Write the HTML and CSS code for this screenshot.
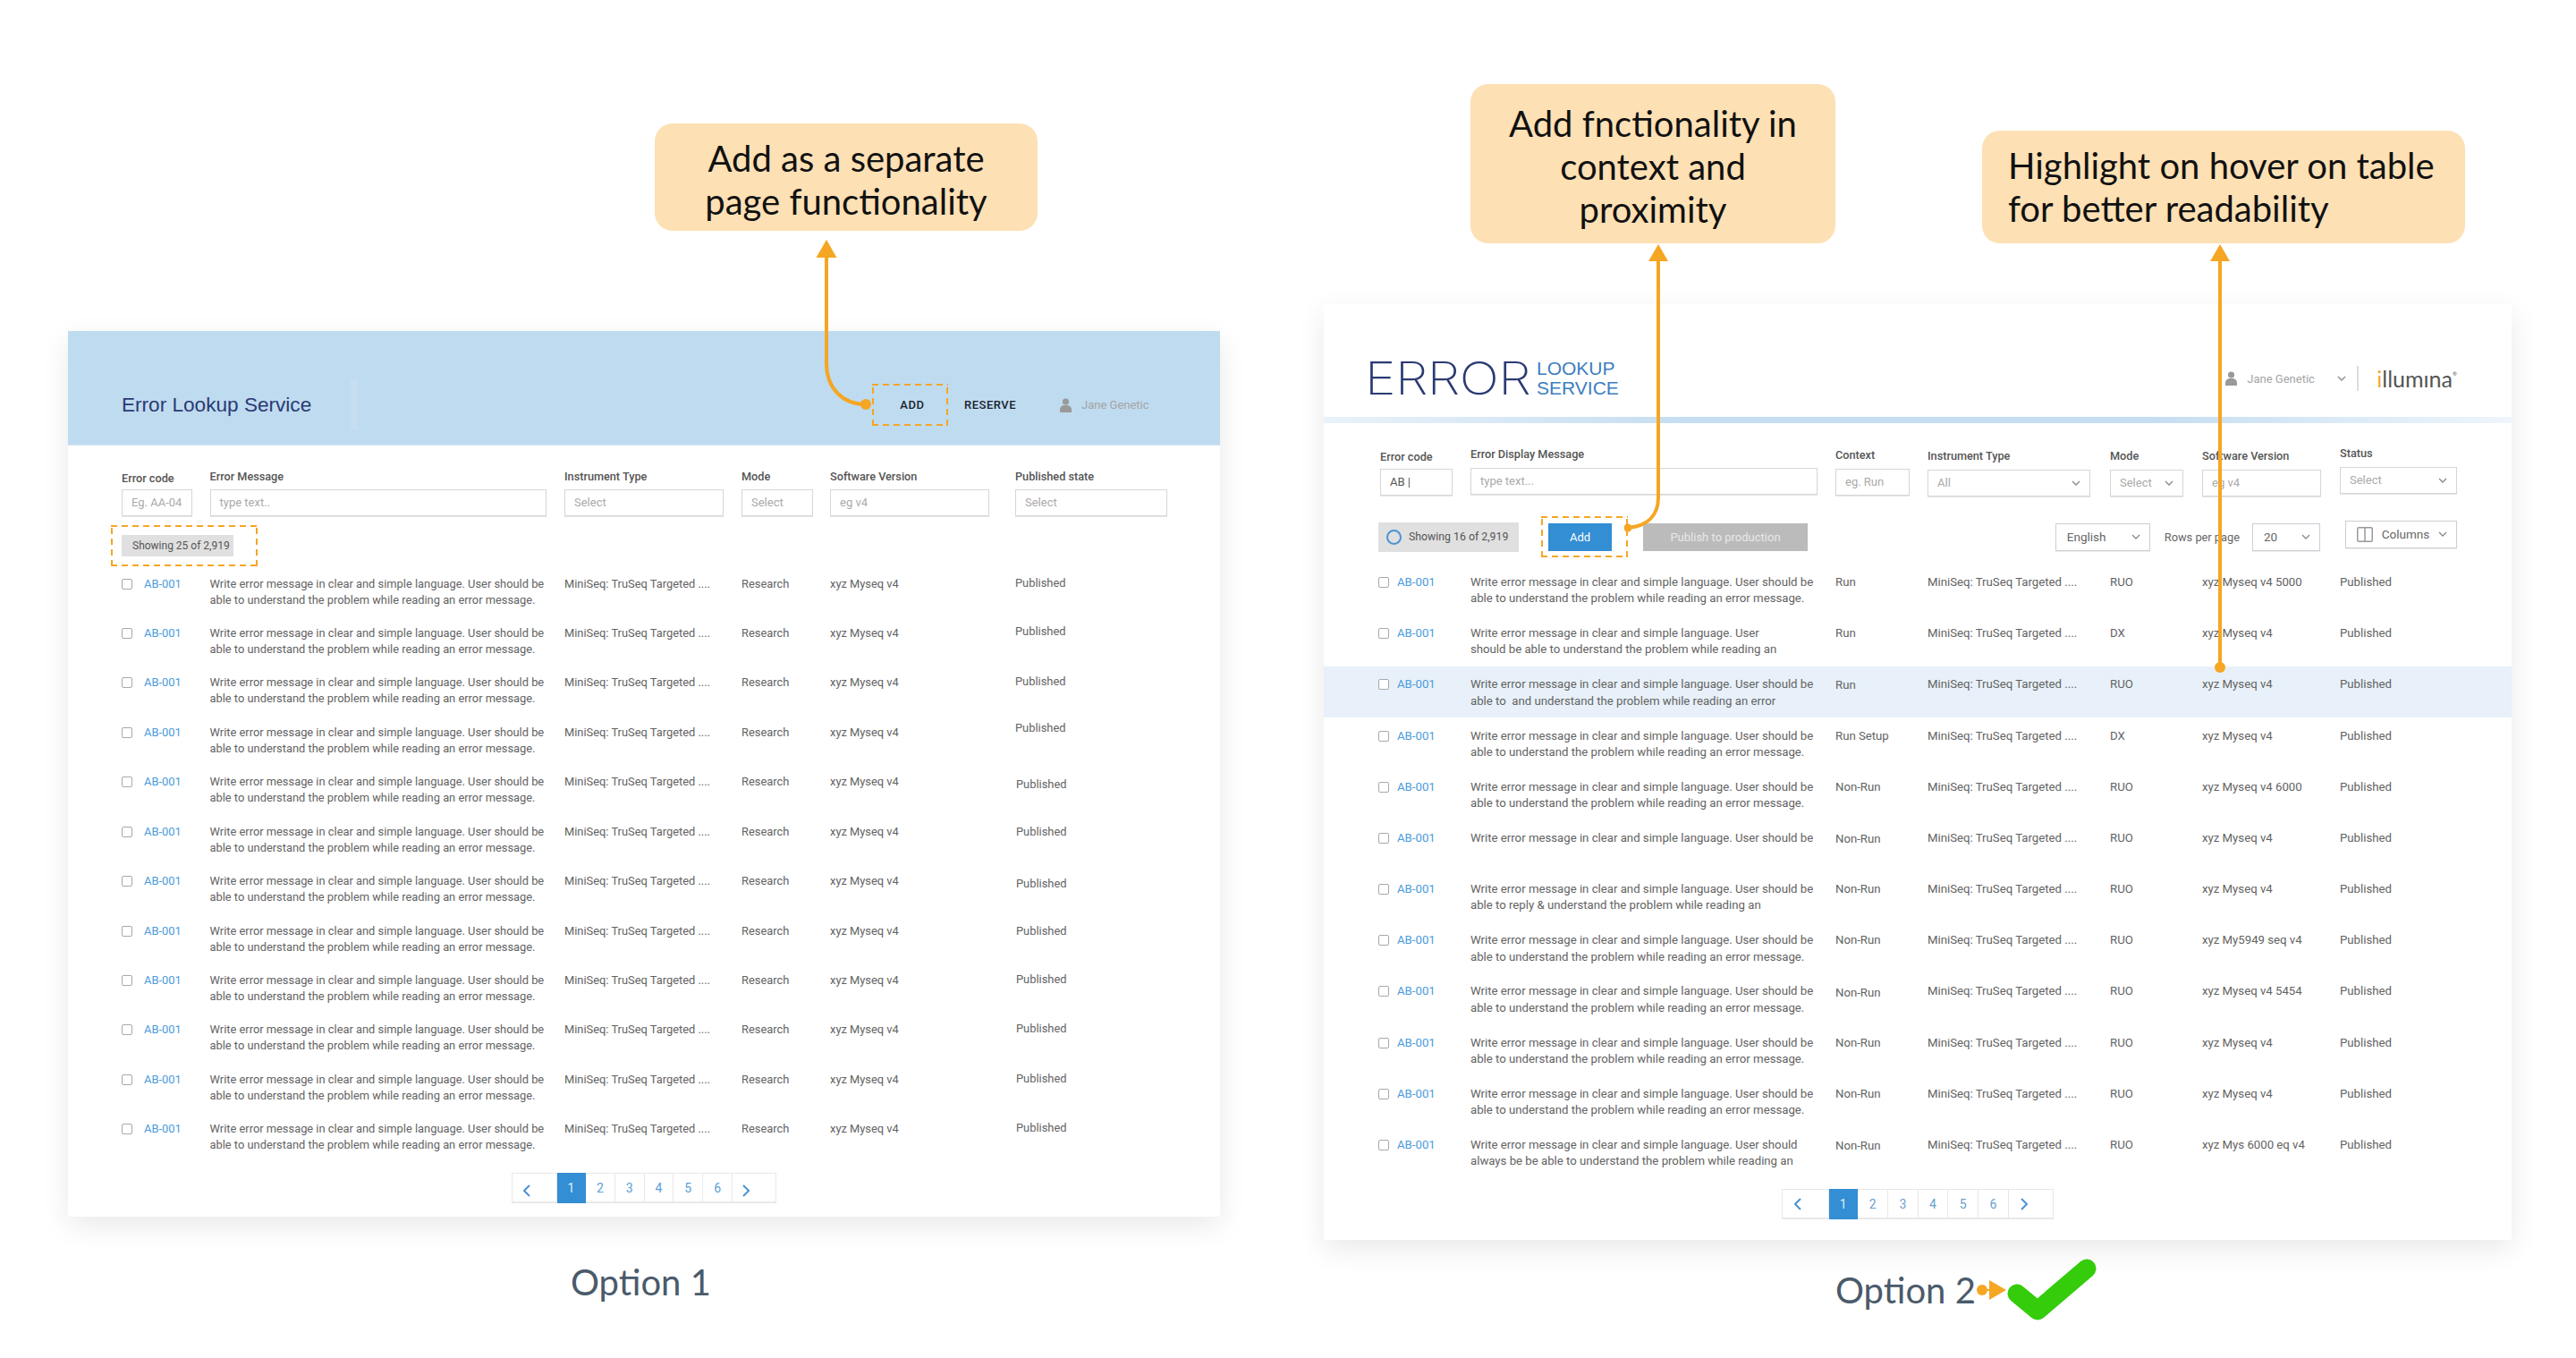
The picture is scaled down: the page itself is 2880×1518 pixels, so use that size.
FILE: index.html
```html
<!DOCTYPE html>
<html lang="en">
<head>
<meta charset="utf-8">
<title>Error Lookup Service options</title>
<link rel="stylesheet" href="styles.css">
</head>
<body>
<main class="canvas">

<div class="callout callout-a">Add as a separate<br>page functionality</div>
<div class="callout callout-b">Add fnctionality in<br>context and<br>proximity</div>
<div class="callout callout-c">Highlight on hover on table<br>for better readability</div>

<section class="panel panel-one">
  <header class="head-one">
    <h1 class="title-one">Error Lookup Service</h1>
    <span class="grip"></span>
    <nav class="nav-one">
      <span class="dash add-box">ADD</span>
      <span class="nav-link">RESERVE</span>
      <svg class="person person-one" viewBox="0 0 13 16"><circle cx="6.5" cy="4" r="3.6"/><path d="M0 16v-3.5C0 9.8 2.5 8.4 4.2 8h4.6C10.5 8.4 13 9.8 13 12.5V16z"/></svg>
      <span class="user">Jane Genetic</span>
    </nav>
  </header>

  <div class="filters">
    <div><div class="label label-low">Error code</div><div class="field w79">Eg. AA-04</div></div>
    <div><div class="label">Error Message</div><div class="field w376">type text..</div></div>
    <div><div class="label">Instrument Type</div><div class="field w177">Select</div></div>
    <div><div class="label">Mode</div><div class="field w80">Select</div></div>
    <div><div class="label">Software Version</div><div class="field w178">eg v4</div></div>
    <div><div class="label">Published state</div><div class="field w170">Select</div></div>
  </div>

  <div class="dash chip-box"><div class="chip">Showing 25 of 2,919</div></div>

  <div class="rows">
    <div class="row"><div class="code"><span class="box"></span><a>AB-001</a></div><div>Write error message in clear and simple language. User should be<br>able to understand the problem while reading an error message.</div><div>MiniSeq: TruSeq Targeted ....</div><div>Research</div><div>xyz Myseq v4</div><div class="up1">Published</div></div>
    <div class="row"><div class="code"><span class="box"></span><a>AB-001</a></div><div>Write error message in clear and simple language. User should be<br>able to understand the problem while reading an error message.</div><div>MiniSeq: TruSeq Targeted ....</div><div>Research</div><div>xyz Myseq v4</div><div class="up2">Published</div></div>
    <div class="row"><div class="code"><span class="box"></span><a>AB-001</a></div><div>Write error message in clear and simple language. User should be<br>able to understand the problem while reading an error message.</div><div>MiniSeq: TruSeq Targeted ....</div><div>Research</div><div>xyz Myseq v4</div><div class="up1">Published</div></div>
    <div class="row"><div class="code"><span class="box"></span><a>AB-001</a></div><div>Write error message in clear and simple language. User should be<br>able to understand the problem while reading an error message.</div><div>MiniSeq: TruSeq Targeted ....</div><div>Research</div><div>xyz Myseq v4</div><div class="up5">Published</div></div>
    <div class="row"><div class="code"><span class="box"></span><a>AB-001</a></div><div>Write error message in clear and simple language. User should be<br>able to understand the problem while reading an error message.</div><div>MiniSeq: TruSeq Targeted ....</div><div>Research</div><div>xyz Myseq v4</div><div class="down3 nudge">Published</div></div>
    <div class="row"><div class="code"><span class="box"></span><a>AB-001</a></div><div>Write error message in clear and simple language. User should be<br>able to understand the problem while reading an error message.</div><div>MiniSeq: TruSeq Targeted ....</div><div>Research</div><div>xyz Myseq v4</div><div class="nudge">Published</div></div>
    <div class="row"><div class="code"><span class="box"></span><a>AB-001</a></div><div>Write error message in clear and simple language. User should be<br>able to understand the problem while reading an error message.</div><div>MiniSeq: TruSeq Targeted ....</div><div>Research</div><div>xyz Myseq v4</div><div class="down3 nudge">Published</div></div>
    <div class="row"><div class="code"><span class="box"></span><a>AB-001</a></div><div>Write error message in clear and simple language. User should be<br>able to understand the problem while reading an error message.</div><div>MiniSeq: TruSeq Targeted ....</div><div>Research</div><div>xyz Myseq v4</div><div class="nudge">Published</div></div>
    <div class="row"><div class="code"><span class="box"></span><a>AB-001</a></div><div>Write error message in clear and simple language. User should be<br>able to understand the problem while reading an error message.</div><div>MiniSeq: TruSeq Targeted ....</div><div>Research</div><div>xyz Myseq v4</div><div class="up1 nudge">Published</div></div>
    <div class="row"><div class="code"><span class="box"></span><a>AB-001</a></div><div>Write error message in clear and simple language. User should be<br>able to understand the problem while reading an error message.</div><div>MiniSeq: TruSeq Targeted ....</div><div>Research</div><div>xyz Myseq v4</div><div class="up1 nudge">Published</div></div>
    <div class="row"><div class="code"><span class="box"></span><a>AB-001</a></div><div>Write error message in clear and simple language. User should be<br>able to understand the problem while reading an error message.</div><div>MiniSeq: TruSeq Targeted ....</div><div>Research</div><div>xyz Myseq v4</div><div class="up1 nudge">Published</div></div>
    <div class="row"><div class="code"><span class="box"></span><a>AB-001</a></div><div>Write error message in clear and simple language. User should be<br>able to understand the problem while reading an error message.</div><div>MiniSeq: TruSeq Targeted ....</div><div>Research</div><div>xyz Myseq v4</div><div class="up1 nudge">Published</div></div>
  </div>

  <div class="pager pager-one">
    <span class="pg pg-prev"><svg viewBox="0 0 10 16"><path d="M8 2L2 8l6 6"/></svg></span>
    <span class="pg pg-on">1</span><span class="pg">2</span><span class="pg">3</span><span class="pg">4</span><span class="pg">5</span><span class="pg">6</span>
    <span class="pg pg-next"><svg viewBox="0 0 10 16"><path d="M2 2l6 6-6 6"/></svg></span>
  </div>
</section>

<section class="panel panel-two">
  <header class="head-two">
    <div class="logo"><span class="logo-main">ERROR</span><span class="logo-sub">LOOKUP<br>SERVICE</span></div>
    <div class="account">
      <svg class="person" viewBox="0 0 13 16"><circle cx="6.5" cy="4" r="3.6"/><path d="M0 16v-3.5C0 9.8 2.5 8.4 4.2 8h4.6C10.5 8.4 13 9.8 13 12.5V16z"/></svg>
      <span class="user">Jane Genetic</span>
      <svg class="chev chev-user" viewBox="0 0 10 6"><path d="M1 1l4 4 4-4"/></svg>
      <span class="rule"></span>
      <span class="illumina"><span class="illumina-i">i</span>llumına<sup>®</sup></span>
    </div>
  </header>
  <div class="glow"></div>

  <div class="filters-two">
    <div class="mt2 ml2"><div class="label label-low">Error code</div><div class="field w81 typed">AB |</div></div>
    <div class="mt1"><div class="label">Error Display Message</div><div class="field w388">type text...</div></div>
    <div class="mt2"><div class="label">Context</div><div class="field w83">eg. Run</div></div>
    <div class="mt3"><div class="label">Instrument Type</div><div class="field w182 sel">All<svg class="chev" viewBox="0 0 10 6"><path d="M1 1l4 4 4-4"/></svg></div></div>
    <div class="mt3"><div class="label">Mode</div><div class="field w82 sel">Select<svg class="chev" viewBox="0 0 10 6"><path d="M1 1l4 4 4-4"/></svg></div></div>
    <div class="mt3"><div class="label">Software Version</div><div class="field w133">eg v4</div></div>
    <div><div class="label">Status</div><div class="field w130 sel">Select<svg class="chev" viewBox="0 0 10 6"><path d="M1 1l4 4 4-4"/></svg></div></div>
  </div>

  <div class="toolbar">
    <div class="chip chip-two"><span class="ring"></span>Showing 16 of 2,919</div>
    <div class="dash btn-box"><button class="btn btn-add">Add</button></div>
    <button class="btn btn-pub">Publish to production</button>
    <div class="tool-right">
      <div class="drop w106">English<svg class="chev" viewBox="0 0 10 6"><path d="M1 1l4 4 4-4"/></svg></div>
      <span class="rpp">Rows per page</span>
      <div class="drop w76">20<svg class="chev" viewBox="0 0 10 6"><path d="M1 1l4 4 4-4"/></svg></div>
      <div class="drop w125 raised"><svg class="cols" viewBox="0 0 18 17"><rect x=".75" y=".75" width="16.5" height="15.5" rx="1.5"/><path d="M9 1v15"/></svg>Columns<svg class="chev" viewBox="0 0 10 6"><path d="M1 1l4 4 4-4"/></svg></div>
    </div>
  </div>

  <div class="rows-two">
    <div class="row2"><div class="code code2"><span class="box"></span><a>AB-001</a></div><div>Write error message in clear and simple language. User should be<br>able to understand the problem while reading an error message.</div><div>Run</div><div>MiniSeq: TruSeq Targeted ....</div><div>RUO</div><div>xyz Myseq v4 5000</div><div>Published</div></div>
    <div class="row2"><div class="code code2"><span class="box"></span><a>AB-001</a></div><div>Write error message in clear and simple language. User<br>should be able to understand the problem while reading an</div><div>Run</div><div>MiniSeq: TruSeq Targeted ....</div><div>DX</div><div>xyz Myseq v4</div><div>Published</div></div>
    <div class="row2 row-hover"><div class="code code2"><span class="box"></span><a>AB-001</a></div><div>Write error message in clear and simple language. User should be<br>able to&nbsp; and understand the problem while reading an error</div><div class="down1">Run</div><div>MiniSeq: TruSeq Targeted ....</div><div>RUO</div><div>xyz Myseq v4</div><div>Published</div></div>
    <div class="row2"><div class="code code2"><span class="box"></span><a>AB-001</a></div><div>Write error message in clear and simple language. User should be<br>able to understand the problem while reading an error message.</div><div>Run Setup</div><div>MiniSeq: TruSeq Targeted ....</div><div>DX</div><div>xyz Myseq v4</div><div>Published</div></div>
    <div class="row2"><div class="code code2"><span class="box"></span><a>AB-001</a></div><div>Write error message in clear and simple language. User should be<br>able to understand the problem while reading an error message.</div><div>Non-Run</div><div>MiniSeq: TruSeq Targeted ....</div><div>RUO</div><div>xyz Myseq v4 6000</div><div>Published</div></div>
    <div class="row2"><div class="code code2"><span class="box"></span><a>AB-001</a></div><div>Write error message in clear and simple language. User should be</div><div class="down1">Non-Run</div><div>MiniSeq: TruSeq Targeted ....</div><div>RUO</div><div>xyz Myseq v4</div><div>Published</div></div>
    <div class="row2"><div class="code code2"><span class="box"></span><a>AB-001</a></div><div>Write error message in clear and simple language. User should be<br>able to reply &amp; understand the problem while reading an</div><div>Non-Run</div><div>MiniSeq: TruSeq Targeted ....</div><div>RUO</div><div>xyz Myseq v4</div><div>Published</div></div>
    <div class="row2"><div class="code code2"><span class="box"></span><a>AB-001</a></div><div>Write error message in clear and simple language. User should be<br>able to understand the problem while reading an error message.</div><div>Non-Run</div><div>MiniSeq: TruSeq Targeted ....</div><div>RUO</div><div>xyz My5949 seq v4</div><div>Published</div></div>
    <div class="row2"><div class="code code2"><span class="box"></span><a>AB-001</a></div><div>Write error message in clear and simple language. User should be<br>able to understand the problem while reading an error message.</div><div class="down2">Non-Run</div><div>MiniSeq: TruSeq Targeted ....</div><div>RUO</div><div>xyz Myseq v4 5454</div><div>Published</div></div>
    <div class="row2"><div class="code code2"><span class="box"></span><a>AB-001</a></div><div>Write error message in clear and simple language. User should be<br>able to understand the problem while reading an error message.</div><div>Non-Run</div><div>MiniSeq: TruSeq Targeted ....</div><div>RUO</div><div>xyz Myseq v4</div><div>Published</div></div>
    <div class="row2"><div class="code code2"><span class="box"></span><a>AB-001</a></div><div>Write error message in clear and simple language. User should be<br>able to understand the problem while reading an error message.</div><div>Non-Run</div><div>MiniSeq: TruSeq Targeted ....</div><div>RUO</div><div>xyz Myseq v4</div><div>Published</div></div>
    <div class="row2"><div class="code code2"><span class="box"></span><a>AB-001</a></div><div>Write error message in clear and simple language. User should<br>always be be able to understand the problem while reading an</div><div class="down1">Non-Run</div><div>MiniSeq: TruSeq Targeted ....</div><div>RUO</div><div>xyz Mys 6000 eq v4</div><div>Published</div></div>
  </div>

  <div class="pager pager-two">
    <span class="pg pg-prev"><svg viewBox="0 0 10 16"><path d="M8 2L2 8l6 6"/></svg></span>
    <span class="pg pg-on">1</span><span class="pg">2</span><span class="pg">3</span><span class="pg">4</span><span class="pg">5</span><span class="pg">6</span>
    <span class="pg pg-next"><svg viewBox="0 0 10 16"><path d="M2 2l6 6-6 6"/></svg></span>
  </div>
</section>

<div class="option option-one">Option 1</div>
<div class="option option-two">Option 2</div>

<svg class="marks" viewBox="0 0 2880 1518">
  <g class="arrow">
    <path d="M968 452C942 452 924 434 924 406V286"/>
    <path d="M1820 590C1842 588 1854 576 1854 556V290"/>
    <path d="M2482 746V290"/>
  </g>
  <g class="arrow-fill">
    <circle cx="968" cy="452" r="6"/>
    <path d="M924 268l11.5 20h-23z"/>
    <circle cx="1820" cy="590" r="4.5"/>
    <path d="M1854 273l11 19h-22z"/>
    <circle cx="2482" cy="746" r="6"/>
    <path d="M2482 273l11 19h-22z"/>
    <circle cx="2216" cy="1442" r="6"/>
    <path d="M2216 1441h10v2h-10z"/>
    <path d="M2224 1431l19 11-19 11z"/>
  </g>
  <path class="tick" d="M2255 1446L2278 1465 2333 1418"/>
</svg>
</main>
</body>
</html>
```
FILE: styles.css
```css
* { box-sizing: border-box; }
html, body { margin: 0; padding: 0; background: #fff; }
.canvas { position: relative; width: 2880px; height: 1518px; overflow: hidden; font-family: Roboto, sans-serif; color: #666; }

/* callouts */
.callout { position: absolute; background: #fde0b4; border-radius: 20px; font-family: Lato, sans-serif; font-size: 40px; line-height: 48px; color: #111; display: flex; align-items: center; justify-content: center; text-align: center; }
.callout-a { left: 732px; top: 138px; width: 428px; height: 120px; padding-top: 6px; }
.callout-b { left: 1644px; top: 94px; width: 408px; height: 178px; padding-top: 6px; }
.callout-c { left: 2216px; top: 146px; width: 540px; height: 126px; justify-content: flex-start; text-align: left; padding-left: 29px; }

/* panels */
.panel { position: absolute; background: #fff; box-shadow: 0 10px 30px rgba(0,0,0,.09); }
.panel-one { left: 76px; top: 370px; width: 1288px; height: 990px; }
.panel-two { left: 1480px; top: 340px; width: 1328px; height: 1046px; }

.dash {
  background-image:
    repeating-linear-gradient(90deg, #f5a623 0 7px, transparent 7px 12px),
    repeating-linear-gradient(90deg, #f5a623 0 7px, transparent 7px 12px),
    repeating-linear-gradient(0deg, #f5a623 0 7px, transparent 7px 12px),
    repeating-linear-gradient(0deg, #f5a623 0 7px, transparent 7px 12px);
  background-size: 100% 2px, 100% 2px, 2px 100%, 2px 100%;
  background-position: 0 0, 0 100%, 0 0, 100% 0;
  background-repeat: no-repeat;
}

/* panel one header */
.head-one { height: 128px; background: #bfdbf0; display: flex; align-items: center; padding: 38px 81px 0 60px; border-bottom: 1px solid #d3e5f3; }
.title-one { margin: 0; font: 400 22.6px/30px "Liberation Sans", sans-serif; color: #2b3a73; }
.grip { width: 8px; height: 55px; margin-left: 44px; background: repeating-linear-gradient(0deg, #c9deef 0 2px, #c2dcf1 2px 3px); }
.nav-one { margin-left: auto; display: flex; align-items: center; }
.add-box { width: 85px; height: 47px; display: flex; align-items: center; justify-content: center; padding-left: 6px; font-weight: 500; font-size: 13px; letter-spacing: .6px; color: #1a1f2b; }
.nav-link { width: 57px; margin-left: 18.5px; font-weight: 500; font-size: 13px; letter-spacing: .5px; color: #1a1f2b; white-space: nowrap; }
.person { width: 13px; height: 16px; fill: #999; flex: none; }
.person-one { margin-left: 50px; }
.user { width: 74px; margin-left: 11px; font-size: 13px; color: #a4a4a4; white-space: nowrap; }

/* filters */
.filters, .row { display: grid; grid-template-columns: 98.5px 396.5px 198px 99px 207px 170px; }
.filters { margin: 26px 0 0 60px; }
.label { font-weight: 500; font-size: 12.7px; line-height: 18px; color: #555; margin-bottom: 5px; white-space: nowrap; }
.label-low { margin-top: 2px; margin-bottom: 3px; }
.field { height: 30px; border: 1px solid #d6d6d6; box-shadow: 0 1px 0 #e6e6e6; background: #fff; padding-left: 10px; font-size: 13px; line-height: 28px; color: #aaa; display: flex; align-items: center; justify-content: space-between; }
.w79 { width: 79px; } .w376 { width: 376.5px; } .w177 { width: 177.5px; } .w80 { width: 80px; } .w178 { width: 178px; } .w170 { width: 170px; }
.w81 { width: 81px; } .w388 { width: 388px; } .w83 { width: 83px; } .w182 { width: 182px; } .w82 { width: 82px; } .w133 { width: 133px; } .w130 { width: 130.5px; }
.typed { color: #555; }
.chip-box { width: 164px; height: 46px; margin: 10px 0 0 48px; padding: 11px 0 0 12px; }
.chip { width: 125px; height: 24px; padding-left: 12px; background: #e0e0e0; font-size: 12px; line-height: 24px; color: #555; white-space: nowrap; }

/* rows */
.rows { margin: 10.5px 0 0 60px; }
.row { height: 55.45px; font-size: 12.86px; line-height: 18px; color: #636363; white-space: nowrap; }
.code { display: flex; gap: 13px; color: #4a9bdc; }
.code a { color: #4a9bdc; }
.box { width: 12px; height: 12px; margin-top: 3px; border: 1px solid #a8a8a8; border-radius: 2px; background: #fff; flex: none; }
.up1 { margin-top: -1px; } .up2 { margin-top: -2px; } .up5 { margin-top: -5px; } .down1 { margin-top: 1px; } .down2 { margin-top: 2px; } .down3 { margin-top: 3px; }
.nudge { margin-left: 1px; }

/* pager */
.pager { display: flex; justify-content: center; height: 34px; }
.pager-one { margin-top: 2.5px; }
.pager-two { margin-top: 12.5px; }
.pg { width: 32.8px; height: 34px; border: 1px solid #e8e8e8; border-left-width: 0; border-bottom-width: 2px; display: flex; align-items: center; justify-content: center; font-size: 14px; color: #5a9fd8; background: #fff; }
.pg svg { width: 10px; height: 16px; fill: none; stroke: #4a93d4; stroke-width: 2; }
.pg-prev { width: 51px; justify-content: flex-start; padding: 6px 0 0 11px; border-left-width: 1px; }
.pg-next { width: 49px; justify-content: flex-start; padding: 6px 0 0 10px; }
.pg-on { background: #338ed4; color: #dfeefa; border-color: #338ed4; width: 32px; }
.pager-two .pg { width: 33.7px; color: #6aa0cc; }
.pager-two .pg-prev { width: 53px; padding: 0 0 0 12px; }
.pager-two .pg-next { width: 50px; padding: 0 0 0 12px; }
.pager-two .pg-on { width: 32px; color: #dfeefa; }

/* panel two header */
.head-two { height: 126px; display: flex; align-items: center; justify-content: space-between; padding: 40px 61px 0 46px; }
.logo { display: flex; align-items: center; }
.logo-main { width: 192px; font-family: Inter, sans-serif; font-weight: 200; font-size: 50px; line-height: 40px; color: #2b3a73; letter-spacing: -.5px; transform: scaleX(1.17); transform-origin: 0 50%; }
.logo-sub { font: 400 21px/22px "Liberation Sans", sans-serif; color: #3d7ebf; }
.account { display: flex; align-items: center; }
.chev { width: 10px; height: 6px; fill: none; stroke: #888; stroke-width: 1.3; flex: none; }
.chev-user { margin-left: 27px; }
.rule { width: 2px; height: 28px; margin: 0 20px 0 12px; background: #ddd; }
.illumina { font-family: Lato, sans-serif; font-weight: 400; font-size: 25px; line-height: 34px; color: #555; }
.illumina-i { color: #e8a93a; }
.illumina sup { font-size: 6px; vertical-align: 13px; line-height: 0; }
.glow { height: 7px; background: linear-gradient(90deg, #eaf2f9 0, #c6def2 30%, #c6def2 70%, #eaf3fa 97%, #eff5fa 100%); }

.filters-two, .row2 { display: grid; grid-template-columns: 103px 408px 103px 204px 103px 154px 131px; }
.filters-two { margin: 25px 0 0 61px; height: 57px; }
.filters-two .label { margin-bottom: 6px; }
.filters-two .label-low { margin-top: 2px; margin-bottom: 4px; }
.mt1 { margin-top: 1px; } .mt2 { margin-top: 2px; } .mt3 { margin-top: 3px; }
.ml2 { margin-left: 2px; }
.sel { padding-right: 10px; }

.toolbar { display: flex; align-items: center; height: 46px; margin-top: 22px; padding: 0 61px; }
.chip-two { width: 157px; height: 33px; line-height: 33px; display: flex; align-items: center; padding-left: 9px; gap: 8px; font-size: 12.3px; }
.ring { width: 17px; height: 17px; border: 2px solid #4a93d4; border-radius: 50%; flex: none; }
.btn-box { width: 97px; height: 46px; margin-left: 25px; padding-left: 8px; display: flex; align-items: center; }
.btn { border: 0; padding: 0; height: 31px; font-family: Roboto, sans-serif; font-size: 13px; color: #fff; }
.btn-add { width: 71px; background: #338ed4; }
.btn-pub { width: 184px; margin-left: 17px; background: #bbb; color: #e8e8e8; }
.tool-right { margin-left: auto; display: flex; align-items: center; }
.drop { height: 31px; border: 1px solid #c9ced4; box-shadow: 0 1px 0 #eee; padding: 0 10px 0 12px; display: flex; align-items: center; justify-content: space-between; font-size: 13.5px; color: #666; }
.w106 { width: 106px; } .w76 { width: 76px; } .w125 { width: 125px; }
.raised { margin: 0 0 6px 28px; padding: 0 10px 0 12px; }
.rpp { margin: 0 14px 0 16px; font-size: 12.8px; color: #666; }
.cols { width: 18px; height: 17px; fill: none; stroke: #999; stroke-width: 1.5; }

.rows-two { margin-top: 7.6px; }
.row2 { height: 57.2px; padding: 11.4px 0 0 61px; font-size: 13.2px; line-height: 18.3px; color: #636363; white-space: nowrap; }
.row-hover { background: #e8f1f9; }
.code2 { gap: 9px; }

/* captions and marks */
.option { position: absolute; font-family: Lato, sans-serif; font-size: 40px; line-height: 50px; color: #4a5a6b; }
.option-one { left: 638px; top: 1408px; }
.option-two { left: 2052px; top: 1417px; }
.marks { position: absolute; left: 0; top: 0; width: 2880px; height: 1518px; pointer-events: none; }
.arrow path { fill: none; stroke: #f5a623; stroke-width: 4; }
.arrow-fill { fill: #f5a623; }
.tick { fill: none; stroke: #34cc0b; stroke-width: 21; stroke-linecap: round; stroke-linejoin: round; }
```
